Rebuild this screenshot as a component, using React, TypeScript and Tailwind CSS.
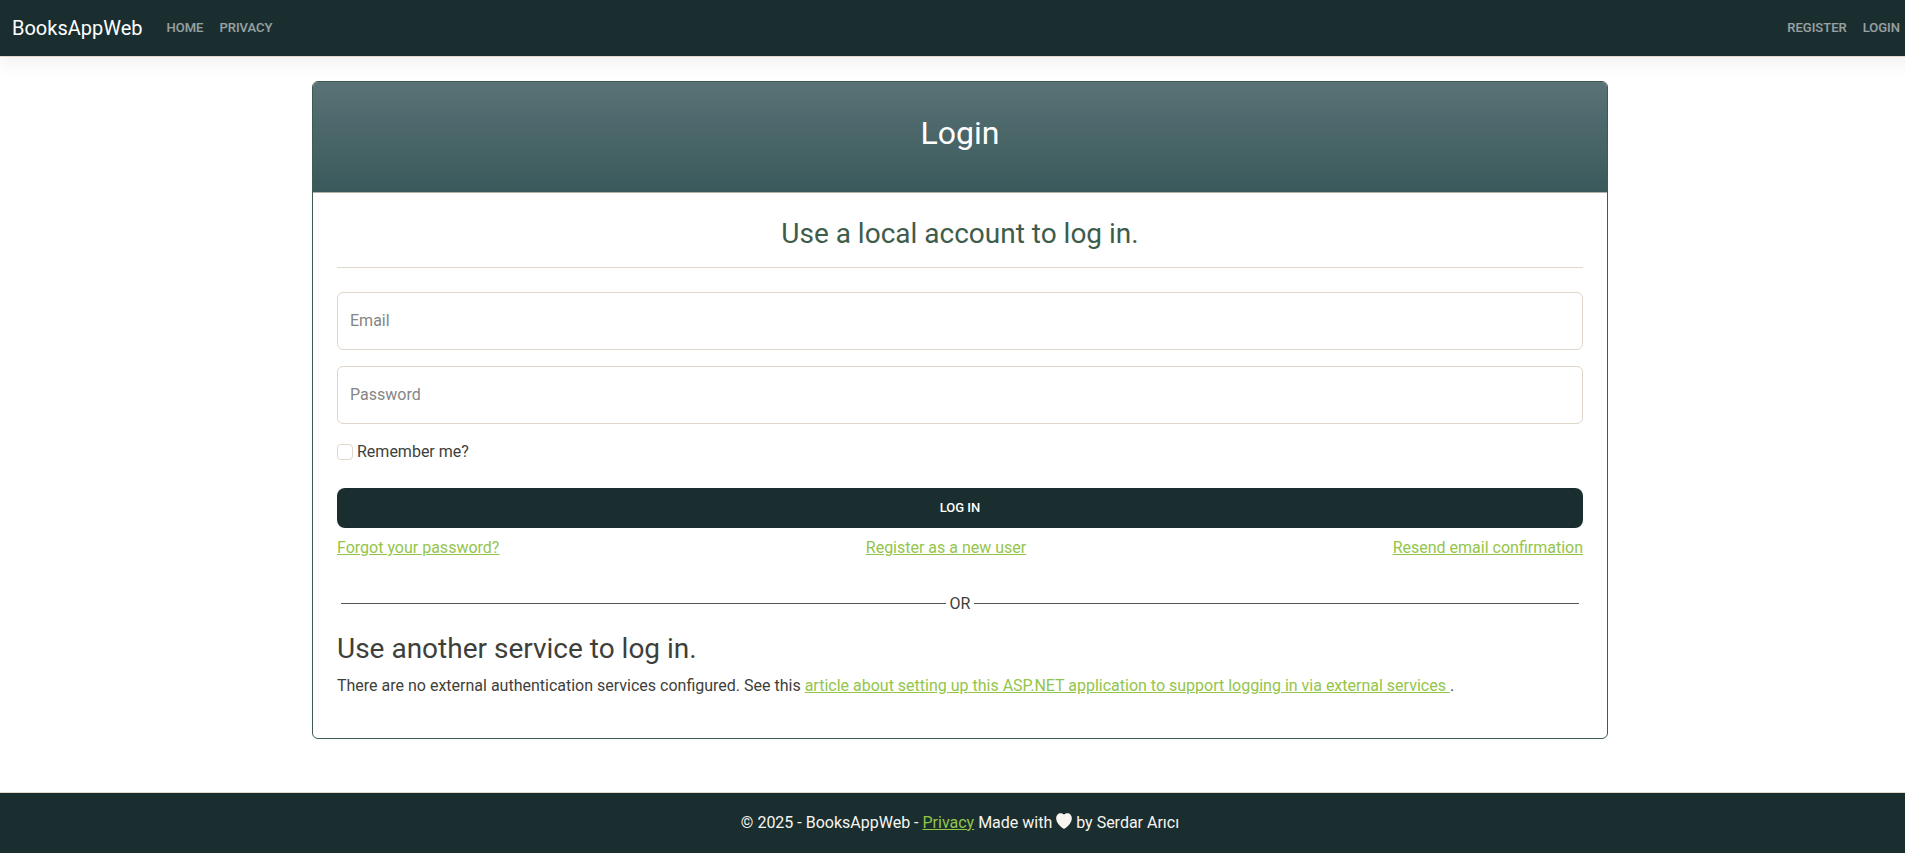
const navLink =
  "block text-[13px] leading-[22px] font-medium uppercase text-white/55 hover:text-white";
const link = "text-[#93c54b] underline hover:text-[#769e3c]";

function Field({ id, label, type }: { id: string; label: string; type: string }) {
  return (
    <div className="relative mb-4">
      <input
        id={id}
        type={type}
        placeholder=" "
        className="peer block h-[58px] w-full rounded-md border border-[#dfd7ca] bg-white px-3 pt-5 text-base text-[#3e3f3a]"
      />
      <label
        htmlFor={id}
        className="pointer-events-none absolute top-1 left-[13px] text-xs leading-4 text-[#858585] peer-placeholder-shown:top-[17px] peer-placeholder-shown:text-base peer-placeholder-shown:leading-6"
      >
        {label}
      </label>
    </div>
  );
}

function Heart() {
  return (
    <svg
      viewBox="0 0 17 16"
      preserveAspectRatio="none"
      className="inline-block size-4 align-[-1px]"
      fill="#f8f5f0"
      aria-hidden="true"
    >
      <path d="M8.5 1.7C9.4.7 10.6.2 12 .2c2.800 0 4.800 2.100 4.800 5 0 2.300-1 4.300-2.700 6.200-1.400 1.600-3 3-4.700 4-.6.35-1.200.35-1.800 0-1.700-1-3.300-2.400-4.700-4C1.200 9.500.2 7.500.2 5.200.2 2.300 2.200.2 5 .2c1.400 0 2.600.5 3.500 1.500z" />
    </svg>
  );
}

export default function App() {
  return (
    <div className="overflow-x-hidden font-[Roboto,sans-serif] text-base text-[#3e3f3a]">
      <div className="flex min-h-screen w-[calc(100%+15px)] flex-col bg-white">
        <header>
          <nav className="flex items-center border-b border-[#dfd7ca] bg-[#1a2e30] px-3 py-[13px] shadow-[0_8px_16px_rgba(0,0,0,0.05)]">
            <a href="#" className="mr-4 text-xl leading-[30px] text-white">
              BooksAppWeb
            </a>
            <ul className="flex grow">
              <li className="px-2">
                <a href="#" className={navLink}>Home</a>
              </li>
              <li className="px-2">
                <a href="#" className={navLink}>Privacy</a>
              </li>
            </ul>
            <ul className="flex">
              <li className="px-2">
                <a href="#" className={navLink}>Register</a>
              </li>
              <li className="px-2">
                <a href="#" className={navLink}>Login</a>
              </li>
            </ul>
          </nav>
        </header>

        <main className="mx-auto mt-6 w-full max-w-[1320px] grow px-3">
          <section className="overflow-hidden rounded-md border border-[#3e5c4b] bg-white">
            <div className="border-b border-[#b4b2a6] bg-linear-to-b from-[#597276] to-[#3a595b] pt-8 pb-10">
              <h1 className="text-center text-[32px] leading-[38px] text-white">Login</h1>
            </div>
            <div className="px-6 pt-6 pb-10">
              <form onSubmit={(e) => e.preventDefault()}>
                <h2 className="text-center text-[28px] leading-[34px] text-[#3e5c4b]">
                  Use a local account to log in.
                </h2>
                <hr className="mt-4 mb-6 border-[#dfd7ca]" />
                <Field id="email" label="Email" type="email" />
                <Field id="password" label="Password" type="password" />
                <label className="mb-6 flex items-center gap-1 leading-6">
                  <input
                    type="checkbox"
                    className="size-4 appearance-none rounded-sm border border-[#dfd7ca] bg-white checked:bg-[#1a2e30]"
                  />
                  Remember me?
                </label>
                <button
                  type="submit"
                  className="block h-10 w-full rounded-lg bg-[#1a2e30] text-[13px] leading-[22px] font-medium text-white uppercase"
                >
                  Log in
                </button>
                <div className="mt-2 flex justify-between leading-6">
                  <a href="#" className={link}>Forgot your password?</a>
                  <a href="#" className={link}>Register as a new user</a>
                  <a href="#" className={link}>Resend email confirmation</a>
                </div>
              </form>
              <div className="mt-8 flex items-center gap-1 px-1 leading-6">
                <span className="h-0.5 grow border-t border-[#555555]" />
                OR
                <span className="h-0.5 grow border-t border-[#555555]" />
              </div>
              <h2 className="mt-4 text-[28px] leading-[34px]">Use another service to log in.</h2>
              <p className="mt-2 leading-6">
                There are no external authentication services configured. See this{" "}
                <a href="#" className={link}>
                  article about setting up this ASP.NET application to support logging in via
                  external services{" "}
                </a>
                .
              </p>
            </div>
          </section>
        </main>

        <footer className="border-t border-[#dfd7ca] bg-[#1a2e30] py-[18px] text-center leading-6 text-[#f8f5f0]">
          © 2025 - BooksAppWeb - <a href="#" className={link}>Privacy</a> Made with <Heart /> by
          Serdar Arıcı
        </footer>
      </div>
    </div>
  );
}
